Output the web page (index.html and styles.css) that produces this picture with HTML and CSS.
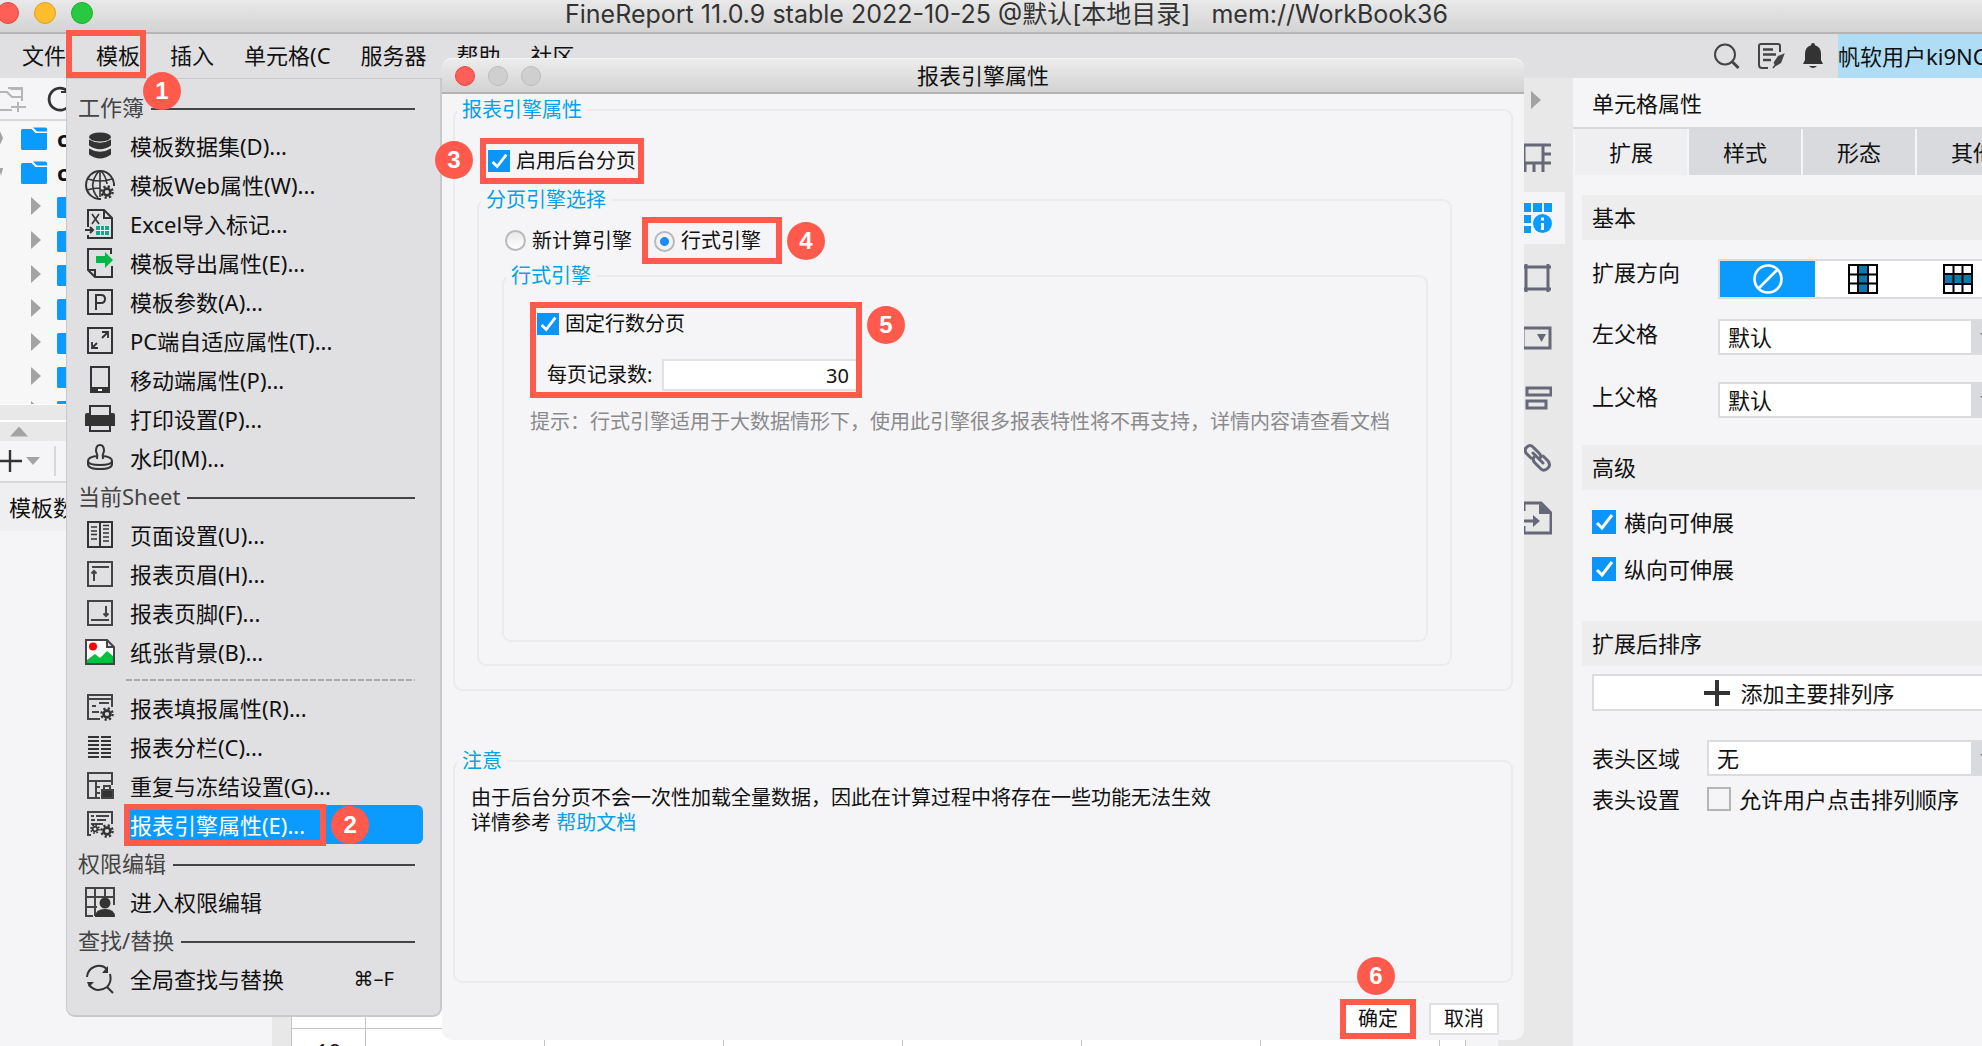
FILE: index.html
```html
<!DOCTYPE html>
<html lang="zh-CN">

<head>
    <meta charset="UTF-8" />
    <meta name="viewport" content="width=device-width, initial-scale=1.0" />
    <title>FineReport</title>
    <link rel="stylesheet" href="styles.css">
</head>

<body>
    <!-- shared icon parts -->
    <svg class="defs" width="0" height="0">
        <symbol id="gear" viewBox="0 0 14 14">
            <circle cx="7" cy="7" r="5.6" fill="none" stroke="#333" stroke-width="2.4" stroke-dasharray="2.2 2.2" />
            <circle cx="7" cy="7" r="3.4" fill="none" stroke="#333" stroke-width="2.6" />
        </symbol>
        <symbol id="folder" viewBox="0 0 26 23">
            <path d="M0 3.500q0-1.500 1.500-1.500h9l4 4h11.500v15.500q0 1.500-1.500 1.500h-23q-1.500 0-1.500-1.500z" fill="#0b9bff" />
            <path d="M12 .500h12.500q1.500 0 1.500 1.500v2.500h-10z" fill="#0b9bff" />
        </symbol>
    </svg>

    <div class="app">
        <header class="titlebar">
            <div class="lights">
                <span class="light red"></span>
                <span class="light yellow"></span>
                <span class="light green"></span>
            </div>
            <h1>FineReport 11.0.9 stable 2022-10-25 @默认[本地目录]&nbsp;&nbsp;&nbsp;mem://WorkBook36</h1>
        </header>

        <nav class="menubar">
            <div class="menus">
                <button type="button">文件</button>
                <button type="button">模板</button>
                <button type="button">插入</button>
                <button type="button">单元格(C</button>
                <button type="button">服务器</button>
                <button type="button">帮助</button>
                <button type="button">社区</button>
            </div>
            <div class="tools">
                <button type="button" aria-label="搜索">
                    <svg width="28" height="28" viewBox="0 0 28 28" fill="none" stroke="#444" stroke-width="2"><circle cx="13" cy="12.500" r="10" /><path d="M20.500 20l6 6" stroke-width="3" /></svg>
                </button>
                <button type="button" aria-label="日志">
                    <svg width="28" height="28" viewBox="0 0 28 28" fill="none" stroke="#444" stroke-width="2"><path d="M23 10V4q0-2-2-2H4q-2 0-2 2v19q0 3 3 3h6" /><path d="M6 7.500h10M6 12.500h13M6 18h8" stroke-width="2.400" /><path d="M26.500 12.500l-3 8-5 3-1-3 4-6zM16 26l4-5" fill="#444" stroke-width="1.500" /></svg>
                </button>
                <button type="button" aria-label="消息">
                    <svg width="22" height="28" viewBox="0 0 22 28" fill="#333"><path d="M11 1q2 0 2 2.200 6 1.800 6 8.800v6l2 4H1l2-4v-6q0-7 6-8.800Q9 1 11 1z" /><path d="M7 24h8q-4 4-8 0z" /></svg>
                </button>
            </div>
            <button type="button" class="user">帆软用户ki9NC</button>
        </nav>

        <div class="workspace">
            <aside class="left">
                <div class="tree-tools">
                    <svg width="26" height="26" viewBox="0 0 26 26" fill="none" stroke="#b5b5b5" stroke-width="2"><path d="M0 6h7l5 5h10M0 24h12M22 11v4M18 16v12M11 21h15M8 2h14v9" /><path d="M8 1h15v3h-12z" fill="#b5b5b5" stroke="none" /></svg>
                    <svg width="26" height="26" viewBox="0 0 26 26" fill="none" stroke="#333" stroke-width="2.800"><path d="M21 5.500A11 11 0 1 0 23 18" /><path d="M14 6h8V1" stroke-width="2" /></svg>
                </div>
                <ul class="tree">
                    <li><span class="tri right"></span><svg width="26" height="23"><use href="#folder" /></svg><b>c</b></li>
                    <li><span class="tri down"></span><svg width="26" height="23"><use href="#folder" /></svg><b>c</b></li>
                    <li class="sub"><span class="tri right"></span><svg width="26" height="23"><use href="#folder" /></svg></li>
                    <li class="sub"><span class="tri right"></span><svg width="26" height="23"><use href="#folder" /></svg></li>
                    <li class="sub"><span class="tri right"></span><svg width="26" height="23"><use href="#folder" /></svg></li>
                    <li class="sub"><span class="tri right"></span><svg width="26" height="23"><use href="#folder" /></svg></li>
                    <li class="sub"><span class="tri right"></span><svg width="26" height="23"><use href="#folder" /></svg></li>
                    <li class="sub"><span class="tri right"></span><svg width="26" height="23"><use href="#folder" /></svg></li>
                    <li class="sub"><span class="tri right"></span><svg width="26" height="23"><use href="#folder" /></svg></li>
                </ul>
                <div class="splitter"></div>
                <div class="collapse"><span class="tri up"></span></div>
                <div class="data-tools">
                    <svg width="22" height="22" viewBox="0 0 22 22" stroke="#333" stroke-width="2.400"><path d="M0 11h22M10 0v22" /></svg>
                    <span class="tri down"></span>
                    <span class="bar"></span>
                </div>
                <div class="data-tab">模板数</div>
            </aside>

            <main class="sheet">
                <table>
                    <tr><th></th><td></td><td></td><td></td><td></td><td></td><td></td><td></td></tr>
                    <tr><th>18</th><td></td><td></td><td></td><td></td><td></td><td></td><td></td></tr>
                </table>
            </main>

            <div class="strip">
                <span class="tri right"></span>
                <button type="button" aria-label="单元格元素">
                    <svg width="30" height="30" viewBox="0 0 30 30" fill="none" stroke="#666877" stroke-width="3"><path d="M0 2h29M0 20h29M21 2v27M2 2v18M21 11h8M3 20v9M12 20v9" /></svg>
                </button>
                <button type="button" class="active" aria-label="单元格属性">
                    <svg width="30" height="30" viewBox="0 0 30 30" fill="#0b9bff"><path d="M0 0h9v9H0zM11 0h9v9h-9zM22 0h8v9h-8zM0 12h9v8H0zM0 23h9v7H0z" /><circle cx="20.500" cy="20.500" r="9.500" /><path d="M19 20h3v7h-3zM19 14.500h3v3h-3z" fill="#fff" /></svg>
                </button>
                <button type="button" aria-label="悬浮元素">
                    <svg width="30" height="30" viewBox="0 0 30 30" fill="none" stroke="#666877" stroke-width="3"><path d="M1 4h28M1 26h28M4 1v28M26 1v28" /></svg>
                </button>
                <button type="button" aria-label="控件设置">
                    <svg width="30" height="30" viewBox="0 0 30 30" fill="none" stroke="#666877" stroke-width="3"><path d="M1 5h27v20H1z" /><path d="M15 11h9l-4.500 8z" fill="#666877" stroke="none" /></svg>
                </button>
                <button type="button" aria-label="条件属性">
                    <svg width="30" height="30" viewBox="0 0 30 30" fill="none" stroke="#666877" stroke-width="3"><path d="M5 5h24v7H5zM5 18h19v7H5z" /></svg>
                </button>
                <button type="button" aria-label="超级链接">
                    <svg width="30" height="30" viewBox="0 0 30 30" fill="none" stroke="#666877" stroke-width="3" stroke-linecap="round"><path d="M9 15l-5-5q-2-4 1-6 3-3 6 0l6 6q3 3 1 5M11 10l10 10M21 13l5 5q3 4 0 7-4 4-7 1l-6-6q-3-3-1-6" /></svg>
                </button>
                <button type="button" aria-label="打印分页">
                    <svg width="30" height="34" viewBox="0 0 30 34" fill="none" stroke="#666877" stroke-width="3"><path d="M2 10V2h17l10 10v20H2v-7M1 20h12" /><path d="M11 14l7 6-7 6zM17 2v11h12z" fill="#666877" stroke="none" /></svg>
                </button>
            </div>

            <aside class="props">
                <div class="props-inner">
                    <h2>单元格属性</h2>
                    <div class="tabs">
                        <button type="button" class="active">扩展</button>
                        <button type="button">样式</button>
                        <button type="button">形态</button>
                        <button type="button">其他</button>
                    </div>
                    <h3>基本</h3>
                    <div class="row">
                        <span class="name">扩展方向</span>
                        <div class="segmented">
                            <button type="button" class="active" aria-label="不扩展">
                                <svg width="32" height="32" viewBox="0 0 32 32" fill="none" stroke="#fff" stroke-width="2.600"><circle cx="16" cy="16" r="13.500" /><path d="M7 25L25 7" /></svg>
                            </button>
                            <button type="button" aria-label="纵向扩展">
                                <svg width="30" height="30" viewBox="0 0 30 30" stroke="#000" stroke-width="2"><path d="M1 1h28v28H1z" fill="#fff" /><path d="M10 1h10v28H10z" fill="#0a7bb0" /><path d="M1 10.500h28M1 19.500h28" /></svg>
                            </button>
                            <button type="button" aria-label="横向扩展">
                                <svg width="30" height="30" viewBox="0 0 30 30" stroke="#000" stroke-width="2"><path d="M1 1h28v28H1z" fill="#fff" /><path d="M1 10h28v10H1z" fill="#0a7bb0" /><path d="M10.500 1v28M19.500 1v28" /></svg>
                            </button>
                        </div>
                    </div>
                    <div class="row parent">
                        <label class="name" for="left-parent">左父格</label>
                        <div class="select"><select id="left-parent"><option>默认</option></select></div>
                    </div>
                    <div class="row parent">
                        <label class="name" for="top-parent">上父格</label>
                        <div class="select"><select id="top-parent"><option>默认</option></select></div>
                    </div>
                    <h3 class="advanced">高级</h3>
                    <div class="checks">
                        <label><input type="checkbox" checked />横向可伸展</label>
                        <label><input type="checkbox" checked />纵向可伸展</label>
                    </div>
                    <h3>扩展后排序</h3>
                    <button type="button" class="add">
                        <svg width="26" height="26" viewBox="0 0 26 26" stroke="#333" stroke-width="4"><path d="M0 13h26M13 0v26" /></svg>
                        添加主要排列序
                    </button>
                    <div class="row head">
                        <label class="name" for="head-area">表头区域</label>
                        <div class="select"><select id="head-area"><option>无</option></select></div>
                    </div>
                    <div class="row head">
                        <span class="name">表头设置</span>
                        <label><input type="checkbox" />允许用户点击排列顺序</label>
                    </div>
                </div>
            </aside>
        </div>

        <!-- 模板 menu -->
        <section class="dropdown">
            <h4>工作簿</h4>
            <button type="button">
                <svg width="30" height="30" viewBox="0 0 30 30" fill="#333"><ellipse cx="15" cy="6" rx="11" ry="4.500" /><path d="M4 8.500q11 6.500 22 0v6q-11 7.500-22 0zM4 17.500q11 6.500 22 0v6q-11 8-22 0z" /></svg>
                <span>模板数据集(D)...</span>
            </button>
            <button type="button">
                <svg width="30" height="30" viewBox="0 0 30 30" fill="none" stroke="#333" stroke-width="2"><path d="M16 29A14 14 0 1 1 29 16" /><path d="M13 28Q2 15 14 1M16 1q5 5 6 13M3 9q12 4 24 0M2 20q6-2 13-2M15 1v26" stroke-width="1.600" /><use href="#gear" x="15" y="15" width="14" height="14" /></svg>
                <span>模板Web属性(W)...</span>
            </button>
            <button type="button">
                <svg width="30" height="30" viewBox="0 0 30 30" fill="none" stroke="#333" stroke-width="2"><path d="M3 18V1h16l8 8v20H3v-3M19 1v8h8M0 21h8M5 18l3 3-3 3" /><path d="M7 5l7 10M14 5L7 15" stroke-width="1.600" /><path d="M11 17h13v9H11z" fill="#13a98d" stroke="none" /><path d="M11 21.500h13M15.500 17v9M19.500 17v9" stroke="#fff" stroke-width="1" /></svg>
                <span>Excel导入标记...</span>
            </button>
            <button type="button">
                <svg width="30" height="30" viewBox="0 0 30 30" fill="none" stroke="#333" stroke-width="2"><path d="M26 6V1H3v21l7 7h17V18M3 22h7v7" /><path d="M11 8h9V4l8 8-8 8v-5h-9z" fill="#04b648" stroke="none" /></svg>
                <span>模板导出属性(E)...</span>
            </button>
            <button type="button">
                <svg width="30" height="30" viewBox="0 0 30 30" fill="none" stroke="#333" stroke-width="2"><path d="M3 3h24v24H3zM11 23V8h5q4 0 4 4t-4 4h-5" /></svg>
                <span>模板参数(A)...</span>
            </button>
            <button type="button">
                <svg width="30" height="30" viewBox="0 0 30 30" fill="none" stroke="#333" stroke-width="2"><path d="M3 2h24v25H3z" /><path d="M17 6h6v6M23 6l-6 6M7 16v6h6M7 22l5-5" stroke-width="1.800" /></svg>
                <span>PC端自适应属性(T)...</span>
            </button>
            <button type="button">
                <svg width="30" height="30" viewBox="0 0 30 30" fill="none" stroke="#333" stroke-width="2"><path d="M6 2h18v25H6z" /><path d="M6 23h18v4H6z" fill="#333" /><path d="M13 25h4" stroke="#fff" /></svg>
                <span>移动端属性(P)...</span>
            </button>
            <button type="button">
                <svg width="30" height="30" viewBox="0 0 30 30" fill="none" stroke="#333" stroke-width="2"><path d="M2 9h26q2 0 2 2v11H0V11q0-2 2-2z" fill="#333" stroke="none" /><path d="M5 2h20v10H5zM5 21h20v6H5z" fill="#e0e0e2" /></svg>
                <span>打印设置(P)...</span>
            </button>
            <button type="button">
                <svg width="30" height="30" viewBox="0 0 30 30" fill="none" stroke="#333" stroke-width="2"><path d="M12 16q1-4-1-8 0-6 4-6t4 6q-2 4-1 8M12 13q-9 1-9 5t12 4 12-4-9-5M3 18v3q0 5 12 5t12-5v-3" /></svg>
                <span>水印(M)...</span>
            </button>

            <h4>当前Sheet</h4>
            <button type="button">
                <svg width="30" height="30" viewBox="0 0 30 30" fill="none" stroke="#333" stroke-width="2"><path d="M3 2h24v25H3zM15 2v25" /><path d="M6 7h6M6 11h6M6 14.500h6M6 19h6M18 5.500h6M18 9h6M18 13h6M18 17h6M18 21h6" stroke-width="1.500" /></svg>
                <span>页面设置(U)...</span>
            </button>
            <button type="button">
                <svg width="30" height="30" viewBox="0 0 30 30" fill="none" stroke="#444" stroke-width="2"><path d="M3 3h24v24H3zM7 8h17M9 22V12M6.500 14.500L9 12l2.500 2.500" /></svg>
                <span>报表页眉(H)...</span>
            </button>
            <button type="button">
                <svg width="30" height="30" viewBox="0 0 30 30" fill="none" stroke="#444" stroke-width="2"><path d="M3 3h24v24H3zM6 22h18M21 8v10M18.500 15.500L21 18l2.500-2.500" /></svg>
                <span>报表页脚(F)...</span>
            </button>
            <button type="button">
                <svg width="30" height="30" viewBox="0 0 30 30" fill="#fff" stroke="#444" stroke-width="2"><path d="M1 3h21l7 7v17H1zM22 3v7h7" /><circle cx="8" cy="9.500" r="4" fill="#f00" stroke="none" /><path d="M2 26v-3l8-6 5 4 7-7 6 5v7z" fill="#04c03f" stroke="none" /></svg>
                <span>纸张背景(B)...</span>
            </button>
            <hr>
            <button type="button">
                <svg width="30" height="30" viewBox="0 0 30 30" fill="none" stroke="#444" stroke-width="2"><path d="M27 14V2H3v24h12M3 6h24M7 13h4M14 10h10M7 19h7" /><use href="#gear" x="15" y="14" width="14" height="14" /></svg>
                <span>报表填报属性(R)...</span>
            </button>
            <button type="button">
                <svg width="30" height="30" viewBox="0 0 30 30" stroke="#333" stroke-width="2"><path d="M3 5h11M3 9h11M3 13h11M3 17h11M3 21h11M3 25h11M16 5h10M16 9h10M16 13h10M16 17h10M16 21h10M16 25h10" /></svg>
                <span>报表分栏(C)...</span>
            </button>
            <button type="button">
                <svg width="30" height="30" viewBox="0 0 30 30" fill="none" stroke="#444" stroke-width="2"><path d="M27 14V2H3v25h12M3 10h24M11 10v17M11 16h4M11 22h4" /><path d="M17 19h11v8H17z" fill="#333" /><path d="M19 18v-3h6v3" /></svg>
                <span>重复与冻结设置(G)...</span>
            </button>
            <button type="button" class="selected">
                <svg width="30" height="30" viewBox="0 0 30 30" fill="none" stroke="#444" stroke-width="2"><path d="M27 14V2H3v23h3M6 6h3M11 6h13M6 10h4M12 10h9M6 14h12" /><use href="#gear" x="5" y="14" width="10" height="10" /><use href="#gear" x="15" y="14" width="14" height="14" /></svg>
                <span class="mark">报表引擎属性(E)...<i class="badge b2">2</i></span>
            </button>

            <h4>权限编辑</h4>
            <button type="button">
                <svg width="30" height="30" viewBox="0 0 30 30" fill="none" stroke="#444" stroke-width="2"><path d="M29 18V1H1v28h7M1 10h28M1 20h11M10 1v28M20 1v9" /><g fill="#333" stroke="none"><circle cx="20" cy="16" r="5.500" /><path d="M10 30q0-8 10-8t10 8z" /></g></svg>
                <span>进入权限编辑</span>
            </button>

            <h4>查找/替换</h4>
            <button type="button">
                <svg width="30" height="30" viewBox="0 0 30 30" fill="none" stroke="#333" stroke-width="2"><path d="M2 13A12 12 0 0 1 22 5M25 10q2 8-3 13-10 7-18-2M22 23l6 6" /><path d="M23 2v7h-6zM2 18h7l-5 5z" fill="#333" stroke="none" /></svg>
                <span>全局查找与替换</span>
                <kbd>⌘–F</kbd>
            </button>
        </section>

        <div class="mark menu-mark"><i class="badge b1">1</i></div>

        <section class="dialog">
            <header>
                <div class="lights">
                    <span class="light red"></span>
                    <span class="light"></span>
                    <span class="light"></span>
                </div>
                <h2>报表引擎属性</h2>
            </header>

            <form>
                <fieldset class="engine">
                    <legend>报表引擎属性</legend>
                    <div class="group">
                        <div class="mark">
                            <label><input type="checkbox" checked />启用后台分页</label>
                            <i class="badge b3">3</i>
                        </div>
                        <fieldset class="choice">
                            <legend>分页引擎选择</legend>
                            <div class="group">
                                <div class="radios">
                                    <label><input type="radio" name="engine" />新计算引擎</label>
                                    <div class="mark">
                                        <label><input type="radio" name="engine" checked />行式引擎</label>
                                        <i class="badge b4">4</i>
                                    </div>
                                </div>
                                <fieldset class="line">
                                    <legend>行式引擎</legend>
                                    <div class="group">
                                        <div class="mark">
                                            <label class="fixed"><input type="checkbox" checked />固定行数分页</label>
                                            <div class="count">
                                                <label for="count">每页记录数:</label>
                                                <input type="text" id="count" value="30" />
                                            </div>
                                            <i class="badge b5">5</i>
                                        </div>
                                        <p class="hint">提示：行式引擎适用于大数据情形下，使用此引擎很多报表特性将不再支持，详情内容请查看文档</p>
                                    </div>
                                </fieldset>
                            </div>
                        </fieldset>
                    </div>
                </fieldset>

                <fieldset class="notice">
                    <legend>注意</legend>
                    <div class="group">
                        <p>由于后台分页不会一次性加载全量数据，因此在计算过程中将存在一些功能无法生效</p>
                        <p>详情参考 <a href="#">帮助文档</a></p>
                    </div>
                </fieldset>

                <footer>
                    <div class="mark">
                        <button type="button">确定</button>
                        <i class="badge b6">6</i>
                    </div>
                    <button type="button" class="cancel">取消</button>
                </footer>
            </form>
        </section>
    </div>
</body>

</html>
```

FILE: styles.css
```css
* {
    box-sizing: border-box;
}

body {
    margin: 0;
    font-family: "Noto Sans", "Noto Sans CJK SC", sans-serif;
    font-size: 22px;
    line-height: 32px;
    color: #111;
    background: #f5f5f7;
    overflow: hidden;
}

h1,
h2,
h3,
h4,
p,
ul {
    margin: 0;
    padding: 0;
    font-weight: normal;
    list-style: none;
}

button,
input,
select {
    font: inherit;
    color: inherit;
    margin: 0;
    padding: 0;
    border: none;
    background: none;
}

button,
label {
    white-space: nowrap;
}

.defs {
    position: absolute;
}

.app {
    position: relative;
    display: flex;
    flex-direction: column;
    height: 100vh;
    overflow: hidden;
}

/* window title */
.titlebar {
    display: flex;
    height: 34px;
    padding-right: 62px;
    background: linear-gradient(#e9e9e9, #d3d3d3);
    border-bottom: 2px solid #b5b5b6;
}

.titlebar h1 {
    flex: 1;
    text-align: center;
    white-space: nowrap;
    font-family: Inter, "Noto Sans CJK SC", sans-serif;
    font-size: 25px;
    line-height: 28px;
    color: #333;
}

.lights {
    display: flex;
    gap: 15px;
    margin: 2px 0 0 -3px;
}

.light {
    width: 22px;
    height: 22px;
    border-radius: 50%;
    border: 1px solid #bcbcbc;
    background: #cfcfcf;
}

.light.red {
    background: #ff5f57;
    border-color: #e2463f;
}

.light.yellow {
    background: #ffbd2e;
    border-color: #dfa023;
}

.light.green {
    background: #28c940;
    border-color: #1dad2b;
}

/* menu bar */
.menubar {
    display: flex;
    height: 44px;
    background: #e0e0e2;
}

.menus {
    display: flex;
    flex: 1;
    gap: 30px;
    padding: 0 0 2px 22px;
}

.tools {
    display: flex;
    align-items: center;
    gap: 17px;
    margin-right: 14px;
}

.tools svg {
    display: block;
}

.user {
    width: 144px;
    overflow: hidden;
    text-align: left;
    background: #b0ddf6;
}

.workspace {
    display: flex;
    flex: 1;
    min-height: 0;
}

/* left side */
.left {
    display: flex;
    flex-direction: column;
    width: 272px;
}

.tree-tools {
    display: flex;
    align-items: center;
    gap: 21px;
    height: 43px;
    border-bottom: 2px solid #d8d8da;
}

.tree {
    height: 283px;
    overflow: hidden;
    background: #f7f7f8;
}

.tree li {
    display: flex;
    align-items: center;
    gap: 10px;
    height: 34px;
    margin-left: -1px;
}

.tree .sub {
    margin-left: 31px;
    gap: 16px;
}

.tri {
    width: 10px;
    height: 18px;
    background: #a3a3a3;
}

.tri.right {
    clip-path: polygon(0 0, 100% 50%, 0 100%);
}

.tri.down {
    width: 14px;
    height: 8px;
    clip-path: polygon(0 0, 100% 0, 50% 100%);
}

.tri.up {
    width: 18px;
    height: 10px;
    clip-path: polygon(0 100%, 50% 0, 100% 100%);
}

.tree li:not(.sub) .tri {
    width: 4px;
    margin-right: 8px;
}

.splitter {
    height: 18px;
    background: #e8e8e8;
    border: solid #fff;
    border-width: 1px 0 2px;
}

.collapse {
    display: flex;
    align-items: center;
    height: 19px;
    padding-left: 10px;
    background: #e8e8e8;
}

.data-tools {
    display: flex;
    align-items: center;
    gap: 4px;
    height: 42px;
    border-bottom: 2px solid #d8d8da;
}

.data-tools .bar {
    width: 2px;
    height: 30px;
    margin-left: 10px;
    background: #d8d8da;
}

.data-tab {
    padding: 8px 9px;
    background: #efeff1;
}

/* spreadsheet */
.sheet {
    display: flex;
    flex: 1;
    flex-direction: column;
    justify-content: flex-end;
    min-width: 0;
    background: #fff;
    border: solid #e8e8e8;
    border-width: 0 0 0 19px;
}

.sheet table {
    width: 100%;
    margin-bottom: -28px;
    table-layout: fixed;
    border-collapse: collapse;
}

.sheet th,
.sheet td {
    height: 45px;
    padding: 0;
    border: 1px solid #c4c4c4;
    font-weight: normal;
}

.sheet th {
    width: 74px;
}

.sheet td {
    width: 179px;
}

.sheet td:last-child {
    width: auto;
}

/* panel switcher */
.strip {
    display: flex;
    flex-direction: column;
    align-items: flex-end;
    width: 107px;
    padding: 13px 8px 0 0;
    background: #e8e8e8;
    border-left: 32px solid #f5f5f7;
}

.strip .tri {
    margin: 0 24px 23px 0;
}

.strip button {
    display: flex;
    align-items: center;
    justify-content: center;
    width: 56px;
    height: 52px;
    margin-bottom: 8px;
}

.strip .active {
    background: #f5f5f7;
}

/* cell properties */
.props {
    width: 409px;
    overflow: hidden;
}

.props-inner {
    width: 460px;
}

.props h2 {
    padding: 9px 19px 8px;
    font-size: 22px;
    border-bottom: 2px solid #d8d8da;
}

.tabs {
    display: flex;
    gap: 2px;
    padding-left: 2px;
}

.tabs button {
    width: 112px;
    height: 46px;
    background: #d9dadd;
}

.tabs .active {
    background: #efeff1;
}

.props h3 {
    height: 45px;
    margin: 0 16px 0 9px;
    padding-left: 10px;
    font-size: 22px;
    line-height: 45px;
    background: #ededed;
}

.tabs + h3 {
    margin-top: 20px;
}

.row {
    display: flex;
    padding-left: 19px;
}

.name {
    width: 126px;
}

.segmented {
    display: flex;
    width: 289px;
    height: 40px;
    margin-top: 19px;
    border: 2px solid #dcdcde;
    background: #fff;
}

.segmented button {
    flex: 1;
    line-height: 0;
}

.segmented .active {
    background: #0b9bff;
}

.row .name {
    margin-top: 16px;
}

.parent {
    padding-top: 20px;
}

.parent + .parent {
    padding-top: 27px;
}

.parent .name {
    align-self: flex-start;
    margin-top: -2px;
}

.select {
    position: relative;
    width: 289px;
}

.select::after {
    content: "";
    position: absolute;
    top: 14px;
    right: 13px;
    width: 14px;
    height: 8px;
    background: #77787d;
    clip-path: polygon(0 0, 100% 0, 50% 100%);
}

.select select {
    display: block;
    width: 100%;
    height: 36px;
    padding-left: 8px;
    appearance: none;
    border: 2px solid #dcdcde;
    border-radius: 0;
    background: linear-gradient(to left, #d9dadd 34px, #fff 34px);
}

.props .advanced {
    margin-top: 27px;
}

.checks {
    display: flex;
    flex-direction: column;
    gap: 15px;
    padding: 16px 19px 36px;
}

label {
    display: flex;
    align-items: center;
    gap: 8px;
}

input[type="checkbox"] {
    width: 24px;
    height: 24px;
    appearance: none;
    border: 2px solid #b4b4b4;
    background: #f5f5f7;
}

input[type="checkbox"]:checked {
    border: none;
    background: #0b95fa url("data:image/svg+xml,%3Csvg xmlns='http://www.w3.org/2000/svg' viewBox='0 0 24 24'%3E%3Cpath d='M5 13l5 5L20 5' fill='none' stroke='white' stroke-width='3'/%3E%3C/svg%3E");
}

.add {
    display: flex;
    align-items: center;
    justify-content: center;
    gap: 10px;
    width: 415px;
    height: 37px;
    margin: 8px 0 29px 19px;
    background: #fff;
    border: 2px solid #dcdcde;
}

.head .name {
    width: 115px;
    margin-top: 0;
}

.head .select {
    width: 300px;
}

.head + .head {
    padding-top: 7px;
}

/* dropdown menu */
.dropdown {
    position: absolute;
    top: 78px;
    left: 66px;
    width: 376px;
    padding: 9px 17px 17px 11px;
    background: #e0e0e2;
    border: solid #c9c9cd;
    border-width: 1px 2px 2px 1px;
    border-radius: 0 0 9px 9px;
}

.dropdown h4 {
    display: flex;
    align-items: center;
    gap: 7px;
    height: 38px;
    margin-right: 8px;
    color: #444;
}

.dropdown h4::after {
    content: "";
    flex: 1;
    height: 2px;
    margin-top: 4px;
    background: #444;
}

.dropdown button {
    display: flex;
    align-items: center;
    width: 100%;
    height: 39px;
    padding-left: 7px;
    gap: 15px;
}

.dropdown svg {
    flex: none;
}

.dropdown kbd {
    margin-left: auto;
    padding-right: 29px;
    font: 20px "Noto Sans", "DejaVu Sans", sans-serif;
}

.dropdown hr {
    height: 2px;
    margin: 8px 8px 7px 48px;
    border: none;
    background: repeating-linear-gradient(to right, #aaa 0 6px, transparent 6px 8px);
}

.dropdown .selected {
    color: #fff;
    gap: 9px;
    border-radius: 6px;
    background: linear-gradient(to right, transparent 50px, #0b9bff 50px);
}

.selected .mark {
    padding-right: 15px;
    line-height: 30px;
}

/* step marks */
.mark {
    position: relative;
    border: 6px solid #ff5a4c;
}

.badge {
    position: absolute;
    width: 38px;
    height: 38px;
    border-radius: 50%;
    background: #ff5a4c;
    color: #fff;
    font: bold 24px/38px "Liberation Sans", sans-serif;
    text-align: center;
}

.menu-mark {
    position: absolute;
    top: 30px;
    left: 66px;
    width: 80px;
    height: 48px;
}

.b1 {
    top: 36px;
    left: 71px;
}

.b2 {
    top: -4px;
    right: -49px;
}

.b3 {
    top: -3px;
    left: -51px;
}

.b4 {
    top: -1px;
    right: -49px;
}

.b5 {
    top: -2px;
    right: -49px;
}

.b6 {
    top: -48px;
    left: 11px;
}

/* dialog */
.dialog {
    position: absolute;
    top: 58px;
    right: 458px;
    bottom: 6px;
    left: 442px;
    display: flex;
    flex-direction: column;
    font-size: 20px;
    line-height: 24px;
    background: #f5f5f7;
    border-radius: 10px;
}

.dialog header {
    display: grid;
    grid-template-columns: 1fr auto 1fr;
    height: 36px;
    background: linear-gradient(#ececec, #d3d3d3);
    border-top: 1px solid #f6f6f6;
    border-bottom: 2px solid #b2b2b2;
    border-radius: 10px 10px 0 0;
}

.dialog header h2 {
    font-size: 22px;
    line-height: 33px;
}

.dialog .lights {
    gap: 13px;
    margin: 7px 0 0 13px;
}

.dialog .light {
    width: 20px;
    height: 20px;
}

.dialog form {
    display: flex;
    flex: 1;
    flex-direction: column;
    padding: 4px 11px 1px;
}

fieldset {
    display: flex;
    flex-direction: column;
    min-width: 0;
    margin: 0;
    padding: 0;
    border: 2px solid #ebebed;
    border-radius: 9px;
}

legend {
    margin-left: 2px;
    padding: 0 5px;
    color: #00a2e8;
}

.group {
    display: flex;
    flex: 1;
    flex-direction: column;
}

.dialog label {
    gap: 6px;
}

.dialog .mark {
    align-self: flex-start;
}

.dialog input[type="checkbox"] {
    width: 22px;
    height: 22px;
}

input[type="radio"] {
    width: 21px;
    height: 21px;
    appearance: none;
    border: 2px solid #b9b9bb;
    border-radius: 50%;
    background: linear-gradient(#e8e8e8, #fff);
}

input[type="radio"]:checked {
    background: radial-gradient(circle, #1c8cf5 4px, #f3f3f5 5px);
}

.engine,
.choice,
.line {
    flex: 1;
}

.engine > .group {
    padding: 16px 59px 23px 22px;
}

.engine > .group > .mark {
    margin: 0 3px 4px;
    padding: 5px 2px;
}

.choice > .group {
    padding: 5px 22px 22px 23px;
}

.radios {
    display: flex;
    align-items: center;
    gap: 10px;
    padding-left: 3px;
}

.radios .mark {
    padding: 6px 15px 5px 6px;
}

.line > .group {
    padding: 14px 26px;
}

.line .mark {
    width: 332px;
    padding: 0 0 1px 1px;
}

.fixed {
    height: 32px;
}

.count {
    display: flex;
    gap: 10px;
    margin-top: 19px;
    padding-left: 10px;
}

.count input {
    flex: 1;
    min-width: 0;
    height: 32px;
    padding-right: 7px;
    text-align: right;
    background: #fff;
    border: 2px solid #e2e2e4;
    border-right: none;
}

.hint {
    margin-top: 12px;
    color: #8a8a8c;
}

.notice {
    min-height: 234px;
    margin-top: 58px;
}

.notice .group {
    padding: 12px 16px;
    line-height: 25px;
}

.notice a {
    color: #00a2e8;
    text-decoration: none;
}

.dialog footer {
    display: flex;
    align-items: center;
    justify-content: flex-end;
    gap: 13px;
    margin-top: 16px;
    padding-right: 14px;
}

.dialog footer button {
    display: block;
    width: 64px;
    height: 28px;
    background: #fff;
}

.dialog footer .cancel {
    width: 70px;
    height: 32px;
    border: 2px solid #e0e0e2;
}
```
